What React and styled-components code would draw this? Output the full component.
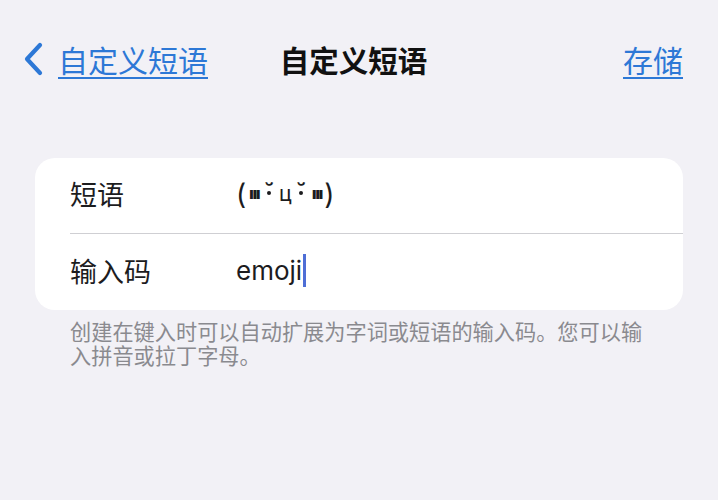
import styled, { createGlobalStyle } from "styled-components";

const GlobalStyle = createGlobalStyle`
  html, body {
    margin: 0;
    padding: 0;
    background: #f2f1f6;
  }
  body {
    font-family: Inter, "Noto Sans CJK SC", sans-serif;
    -webkit-font-smoothing: antialiased;
  }
`;

const Screen = styled.div`
  width: 718px;
  height: 500px;
  background: #f2f1f6;
  overflow: hidden;
`;

const NavBar = styled.header`
  display: grid;
  grid-template-columns: 1fr auto 1fr;
  align-items: center;
  padding: 37px 35px 0 24px;
  height: 40px;
`;

const BackLink = styled.a`
  display: flex;
  align-items: center;
  gap: 14px;
  color: #2d78d6;
  font-size: 30px;
  text-decoration: none;
  justify-self: start;

  span {
    text-decoration: underline;
    text-decoration-thickness: 2px;
    text-underline-offset: 5px;
  }
`;

const Title = styled.h1`
  margin: 0;
  font-size: 29.5px;
  font-weight: 600;
  color: #111;
`;

const SaveLink = styled.a`
  justify-self: end;
  color: #2d78d6;
  font-size: 30px;
  text-decoration: underline;
  text-decoration-thickness: 2px;
  text-underline-offset: 5px;
`;

const Card = styled.section`
  margin: 81px 35px 0 35px;
  background: #fff;
  border-radius: 20px;
  overflow: hidden;
`;

const Row = styled.div`
  display: grid;
  grid-template-columns: 166px 1fr;
  align-items: center;
  margin-left: 35px;
  height: ${(p) => p.$h}px;
  border-bottom: ${(p) => (p.$divider ? "1px solid #cfcfd3" : "none")};
`;

const Label = styled.span`
  font-size: 27px;
  color: #1c1c1e;
  margin-top: -4px;
`;

const Value = styled.span`
  display: flex;
  align-items: center;
  font-size: 26px;
  color: #1c1c1e;
  margin-top: -4px;
`;

/* (灬˘̣ц˘̣灬) drawn from small glyph pieces */
const Kaomoji = styled.span`
  display: inline-flex;
  align-items: center;
  font-size: 28px;
  color: #1c1c1e;
`;

const Blush = styled.span`
  font-size: 15px;
  font-weight: 900;
  letter-spacing: -1px;
  align-self: flex-end;
  margin: 0 2px 8px 3px;
`;

const Eye = styled.span`
  display: inline-flex;
  flex-direction: column;
  align-items: center;
  margin: -12px 3px 0;
  line-height: 1;

  b {
    font-size: 22px;
    font-weight: 700;
    height: 11px;
  }
  i {
    width: 4px;
    height: 4px;
    border-radius: 50%;
    background: #1c1c1e;
  }
`;

const Mouth = styled.span`
  font-size: 21px;
  margin: 0 2px;
`;

const Caret = styled.span`
  display: inline-block;
  width: 3px;
  height: 33px;
  margin-left: 1px;
  background: #4e6ed6;
`;

const Footnote = styled.p`
  margin: 10px 0 0 70px;
  width: 586px;
  font-size: 21.2px;
  line-height: 24px;
  color: #8a8a8f;
`;

function Chevron() {
  return (
    <svg width="20" height="34" viewBox="0 0 20 34">
      <path
        d="M16 3 L3 17 L16 31"
        fill="none"
        stroke="#2d78d6"
        strokeWidth="4.2"
        strokeLinecap="round"
        strokeLinejoin="round"
      />
    </svg>
  );
}

export default function App() {
  return (
    <Screen>
      <GlobalStyle />
      <NavBar>
        <BackLink>
          <Chevron />
          <span>自定义短语</span>
        </BackLink>
        <Title>自定义短语</Title>
        <SaveLink>存储</SaveLink>
      </NavBar>

      <Card>
        <Row $h={75} $divider>
          <Label>短语</Label>
          <Value>
            <Kaomoji>
              (<Blush>ııı</Blush>
              <Eye><b>˘</b><i /></Eye>
              <Mouth>ц</Mouth>
              <Eye><b>˘</b><i /></Eye>
              <Blush>ııı</Blush>)
            </Kaomoji>
          </Value>
        </Row>
        <Row $h={76}>
          <Label>输入码</Label>
          <Value>
            emoji
            <Caret />
          </Value>
        </Row>
      </Card>

      <Footnote>
        创建在键入时可以自动扩展为字词或短语的输入码。您可以输入拼音或拉丁字母。
      </Footnote>
    </Screen>
  );
}
